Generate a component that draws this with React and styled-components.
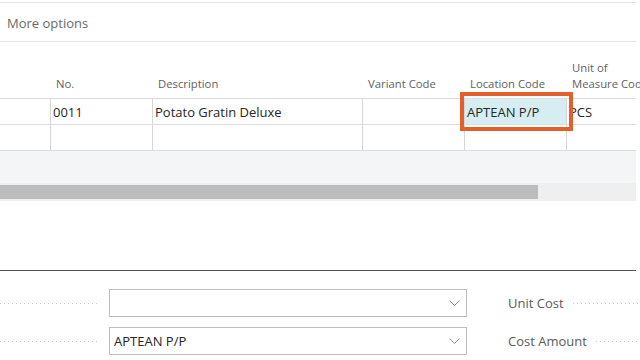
import React from "react";
import styled, { createGlobalStyle } from "styled-components";

const GlobalStyle = createGlobalStyle`
  body {
    margin: 0;
    background: #fff;
    font-family: "Open Sans", "Noto Sans", sans-serif;
  }
`;

const Page = styled.div`
  width: 640px;
  height: 360px;
  overflow: hidden;
  background: #fff;
  color: #262626;
`;

const OptionsBar = styled.div`
  box-sizing: border-box;
  margin-top: 2px;
  width: 636px;
  height: 40px;
  border-top: 1px solid #e3e3e3;
  border-bottom: 1px solid #e3e3e3;
  display: flex;
  align-items: center;
  padding: 1px 0 0 7px;
  font-size: 13px;
  color: #6a6a6a;
`;

const GridWrap = styled.div`
  width: 636px;
`;

const cols = "50px 102px 210px 102px 102px 90px";

const HeaderRow = styled.div`
  display: grid;
  grid-template-columns: ${cols};
  box-sizing: border-box;
  height: 57px;
  border-bottom: 1px solid #dcdcdc;
`;

const HeaderCell = styled.div`
  display: flex;
  align-items: flex-end;
  padding: 0 0 7px 6px;
  font-size: 11.3px;
  line-height: 15.5px;
  color: #616161;
  white-space: nowrap;
`;

const Row = styled.div`
  display: grid;
  grid-template-columns: ${cols};
  height: 26px;
  box-sizing: border-box;
  border-bottom: 1px solid #dcdcdc;
`;

const Cell = styled.div`
  position: relative;
  display: flex;
  align-items: center;
  padding-left: 2px;
  font-size: 13px;
  white-space: nowrap;
  border-left: ${(p) => (p.$first ? "none" : "1px solid #d6d6d6")};
  background: ${(p) => (p.$focused ? "#d6eef1" : "transparent")};

  ${(p) =>
    p.$focused &&
    `
    &::after {
      content: "";
      position: absolute;
      top: -7px;
      left: -5px;
      right: -7px;
      bottom: -7px;
      border: 4px solid #e3602b;
      z-index: 2;
    }
  `}
`;

const Band = styled.div`
  width: 636px;
  height: 32px;
  background: #f4f5f7;
`;

const ScrollTrack = styled.div`
  width: 636px;
  height: 18px;
  box-sizing: border-box;
  padding: 2px 0;
  background: #efefef;
`;

const ScrollThumb = styled.div`
  width: 538px;
  height: 14px;
  background: #bcbcbc;
`;

const Divider = styled.div`
  margin-top: 69px;
  width: 636px;
  height: 1px;
  background: #50525f;
`;

const Form = styled.div`
  margin-top: 18px;
  display: grid;
  grid-template-columns: 467px 1fr;
  column-gap: 41px;
  row-gap: 10px;
`;

const FieldRow = styled.div`
  display: flex;
  align-items: center;
  height: 28px;
  gap: 9px;
`;

const Leader = styled.div`
  flex: 1;
  height: 1px;
  background-image: linear-gradient(to right, #c9c9c9 1px, transparent 1px);
  background-size: 4px 1px;
  background-repeat: repeat-x;
`;

const Select = styled.div`
  box-sizing: border-box;
  width: 358px;
  height: 28px;
  border: 1px solid #bdbdbd;
  display: flex;
  align-items: center;
  justify-content: space-between;
  padding: 0 6px 0 4px;
  font-size: 13px;
  color: #262626;
`;

const Label = styled.span`
  font-size: 13px;
  color: #5a5a5a;
  white-space: nowrap;
`;

const Chevron = () => (
  <svg width="11" height="6" viewBox="0 0 11 6">
    <path d="M0.5 0.5 L5.5 5.5 L10.5 0.5" fill="none" stroke="#8a8a8a" strokeWidth="1" />
  </svg>
);

export default function App() {
  return (
    <Page>
      <GlobalStyle />
      <OptionsBar>More options</OptionsBar>
      <GridWrap>
        <HeaderRow>
          <HeaderCell />
          <HeaderCell>No.</HeaderCell>
          <HeaderCell>Description</HeaderCell>
          <HeaderCell>Variant Code</HeaderCell>
          <HeaderCell>Location Code</HeaderCell>
          <HeaderCell>
            Unit of
            <br />
            Measure Code
          </HeaderCell>
        </HeaderRow>
        <Row>
          <Cell $first />
          <Cell>0011</Cell>
          <Cell>Potato Gratin Deluxe</Cell>
          <Cell />
          <Cell $focused>APTEAN P/P</Cell>
          <Cell>PCS</Cell>
        </Row>
        <Row>
          <Cell $first />
          <Cell />
          <Cell />
          <Cell />
          <Cell />
          <Cell />
        </Row>
      </GridWrap>
      <Band />
      <ScrollTrack>
        <ScrollThumb />
      </ScrollTrack>
      <Divider />
      <Form>
        <FieldRow>
          <Leader />
          <Select>
            <span />
            <Chevron />
          </Select>
        </FieldRow>
        <FieldRow>
          <Label>Unit Cost</Label>
          <Leader />
        </FieldRow>
        <FieldRow>
          <Leader />
          <Select>
            <span>APTEAN P/P</span>
            <Chevron />
          </Select>
        </FieldRow>
        <FieldRow>
          <Label>Cost Amount</Label>
          <Leader />
        </FieldRow>
      </Form>
    </Page>
  );
}
